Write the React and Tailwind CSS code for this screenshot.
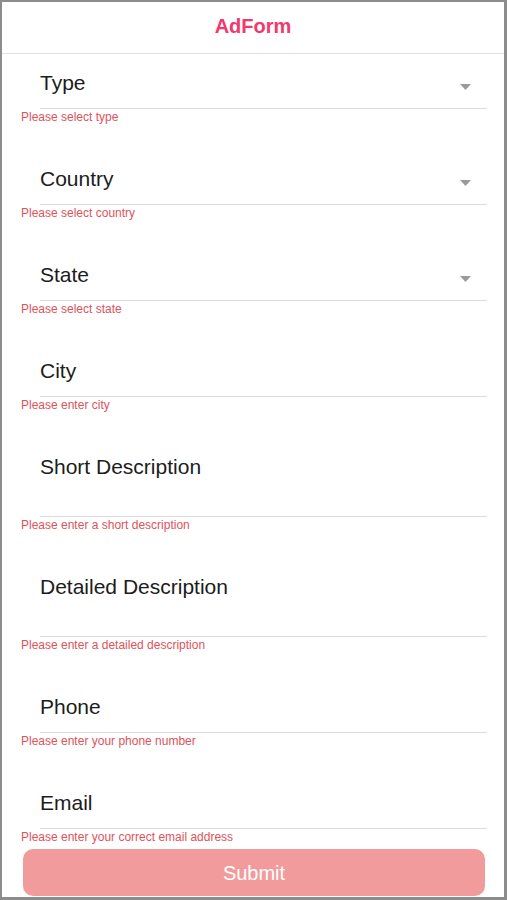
import React from 'react';

const fields = [
  { label: 'Type', error: 'Please select type', select: true },
  { label: 'Country', error: 'Please select country', select: true },
  { label: 'State', error: 'Please select state', select: true },
  { label: 'City', error: 'Please enter city' },
  { label: 'Short Description', error: 'Please enter a short description', tall: true },
  { label: 'Detailed Description', error: 'Please enter a detailed description', tall: true },
  { label: 'Phone', error: 'Please enter your phone number' },
  { label: 'Email', error: 'Please enter your correct email address' },
];

function Field({ label, error, select, tall }) {
  return (
    <div className="mb-[25px]">
      <div
        className={`ml-[38px] mr-[17px] flex items-start justify-between border-b border-[#dadada] pt-[17px] ${
          tall ? 'pb-[37px]' : 'pb-[13px]'
        }`}
      >
        <span className="text-[21px] leading-[24px] text-[#1c1c1c]">{label}</span>
        {select && (
          <svg className="mr-[16px] mt-[13px]" width="11" height="6" viewBox="0 0 11 6">
            <path d="M0 0h11L5.5 6z" fill="#9a9a9a" />
          </svg>
        )}
      </div>
      <p className="ml-[19px] text-[12px] leading-[16px] text-[#e0525c]">{error}</p>
    </div>
  );
}

export default function App() {
  return (
    <div
      className="h-[900px] w-[507px] overflow-hidden border-t-2 border-l-2 border-r-[3px] border-b-[3px] border-[#8c8c8c] bg-white"
      style={{ fontFamily: '"Liberation Sans", Arial, sans-serif' }}
    >
      {/* Header */}
      <div className="flex h-[52px] items-center justify-center border-b border-[#e2e2e2] pb-[3px]">
        <h1 className="text-[20px] font-bold text-[#f2386c]">AdForm</h1>
      </div>

      {/* Form */}
      <div>
        {fields.map((f) => (
          <Field key={f.label} {...f} />
        ))}
      </div>

      <div className="-mt-[21px] ml-[21px] mr-[19px]">
        <button className="flex h-[47px] w-full items-center justify-center rounded-[10px] bg-[#f29b9d] text-[20px] text-white">
          Submit
        </button>
      </div>
    </div>
  );
}
